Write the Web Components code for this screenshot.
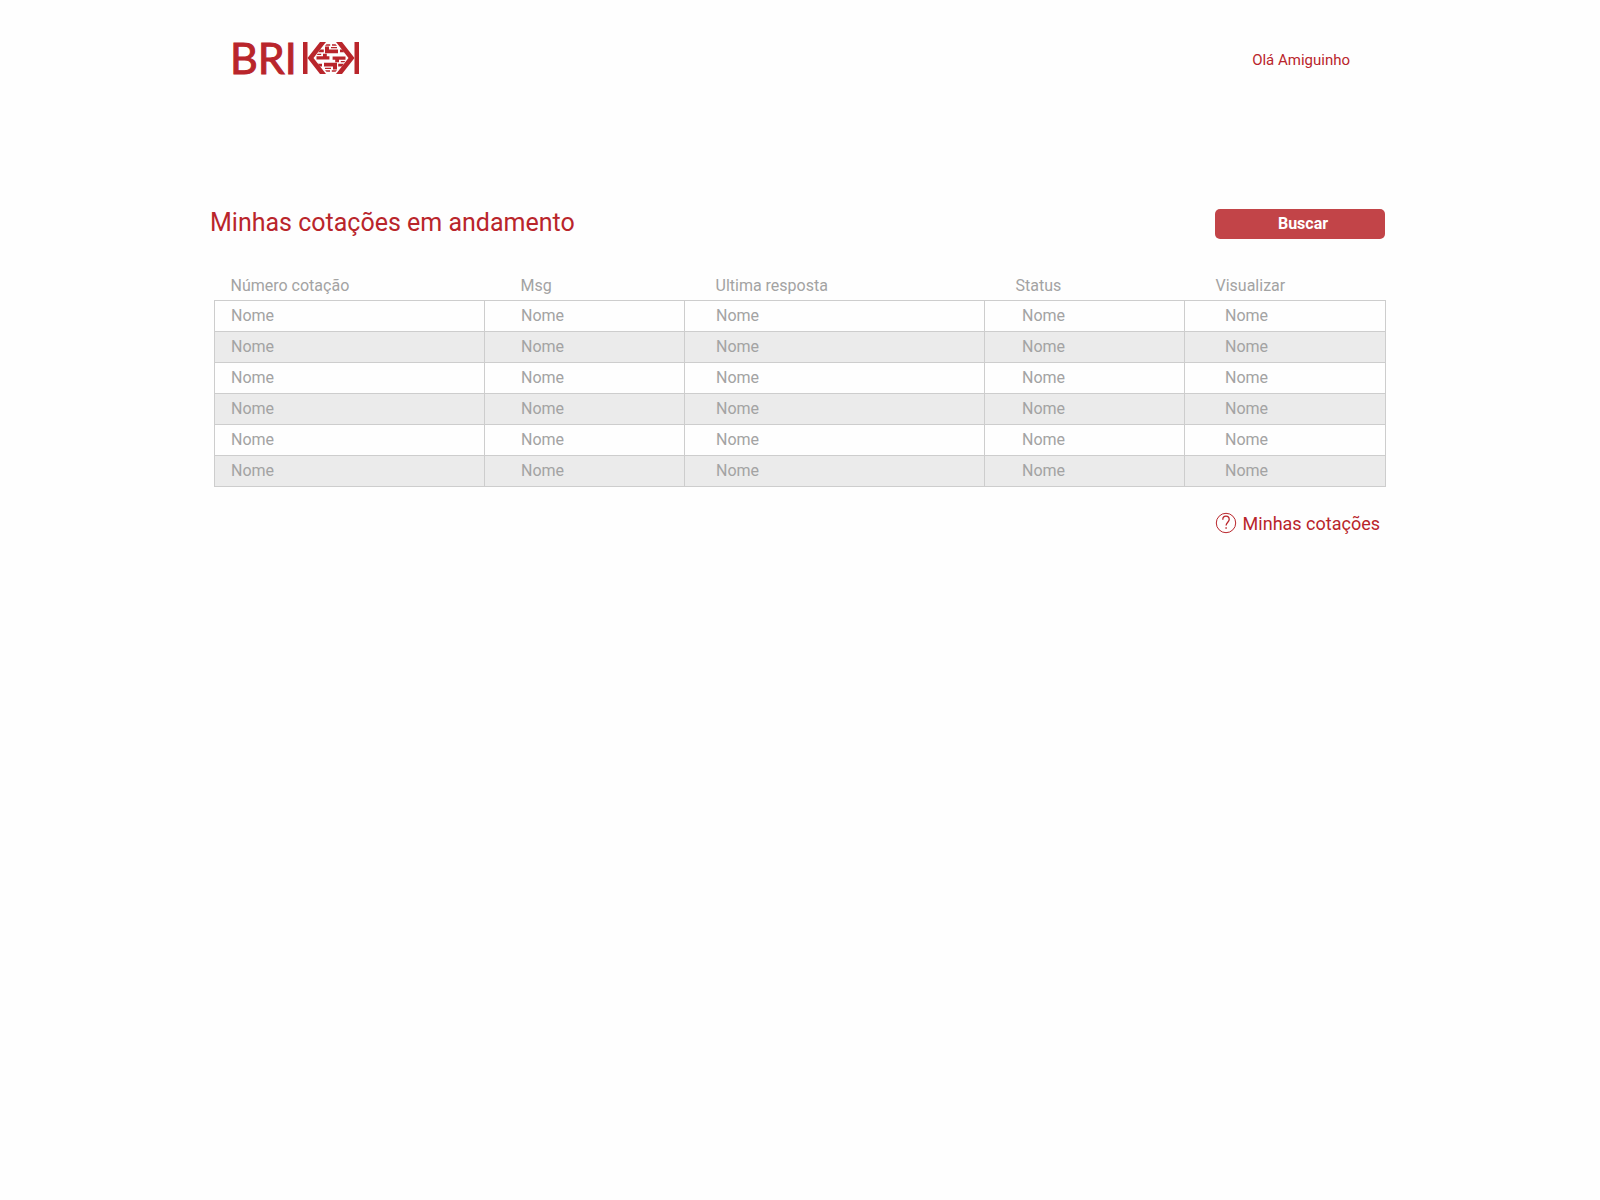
<!DOCTYPE html>
<html lang="pt-BR">
<head>
<meta charset="utf-8">
<meta name="viewport" content="width=device-width, initial-scale=1">
<title>Brikk - Minhas cotações</title>
<style>
  body { margin: 0; background: #fefefe; font-family: Roboto, "Liberation Sans", sans-serif; color: #b9252b; }
</style>
</head>
<body>
<quotes-page>
  <brikk-logo slot="brand"></brikk-logo>
  <user-greeting slot="user">Olá Amiguinho</user-greeting>
  <section-header>
    Minhas cotações em andamento
    <action-button slot="action">Buscar</action-button>
  </section-header>
  <quotes-table></quotes-table>
  <help-link>Minhas cotações</help-link>
</quotes-page>
<script>
  class ShadowElement extends HTMLElement {
    constructor() {
      super();
      this.attachShadow({ mode: 'open' }).innerHTML = this.constructor.markup;
    }
  }

  customElements.define('quotes-page', class extends ShadowElement {
    static markup = `
      <style>
        :host { display: block; max-width: 1180px; margin: 0 auto; }
        header { display: flex; align-items: center; justify-content: space-between; height: 120px; padding: 0 40px 0 20px; }
        main { display: flex; flex-direction: column; padding-top: 85px; }
      </style>
      <header><slot name="brand"></slot><slot name="user"></slot></header>
      <main><slot></slot></main>`;
  });

  customElements.define('brikk-logo', class extends ShadowElement {
    static markup = `
      <style>
        :host { display: block; padding-bottom: 2px; }
        a { display: block; }
        svg { display: block; fill: #b9252b; }
        text { font: 43px Lato, sans-serif; stroke: #b9252b; stroke-width: 1px; }
      </style>
      <a href="#" aria-label="Brikk">
        <svg width="132" height="58" viewBox="-2 -12 132 58">
          <defs>
            <path id="bricks" d="M-6-11.500h4v3H7v3.800H-6zM-14.500-1.700H-8v-2.600h3.800v2.600H-1.600V1.600H-14.500zM-11-8.500h3.800v2.800h-5.600zM9-8.500h2.200l2 2.800H9zM-4.500-13.700H-.8v1.500H-6zM1-13.700h3.500l1.500 1.500H1zM0-11h6v1.300H0zM-13.300-4.300h3.500v1.200h-4.400z"/>
          </defs>
          <text x="-2" y="32">BRI</text>
          <path d="M71 0h4.500v32H71zM122.500 0h4.500v32h-4.500z"/>
          <path d="M75.500 16 88 0H94L81.500 16 94 32H88zM122.500 16 110 0H104L116.500 16 104 32H110z"/>
          <use href="#bricks" transform="translate(99 16)"/>
          <use href="#bricks" transform="translate(99 16) rotate(180)"/>
        </svg>
      </a>`;
  });

  customElements.define('user-greeting', class extends ShadowElement {
    static markup = `
      <style>
        :host { display: block; font-size: 15px; line-height: 20px; }
      </style>
      <slot></slot>`;
  });

  customElements.define('section-header', class extends ShadowElement {
    static markup = `
      <style>
        :host { display: flex; align-items: flex-end; justify-content: space-between; padding-right: 5px; }
        h1 { margin: 0; font-size: 25px; line-height: 36px; font-weight: 400; }
      </style>
      <h1><slot></slot></h1>
      <slot name="action"></slot>`;
  });

  customElements.define('action-button', class extends ShadowElement {
    static markup = `
      <style>
        :host { display: block; padding-bottom: 2px; }
        button { display: block; width: 170px; height: 30px; padding: 0 0 0 6px; border: 0; border-radius: 5px;
          background: #c24448; color: #fff; font: 700 16px/30px Roboto, sans-serif; cursor: pointer; }
      </style>
      <button type="button"><slot></slot></button>`;
  });

  customElements.define('quotes-table', class extends ShadowElement {
    static markup = `
      <style>
        :host { display: block; padding: 28px 4px 0; }
        table { width: 100%; border-collapse: collapse; table-layout: fixed; color: #a3a3a3; font-size: 16px; line-height: 20px; }
        th, td { padding: 5px 0 5px 31px; text-align: left; font-weight: 400; }
        th { padding-top: 7px; padding-bottom: 4px; }
        td { border: 1px solid #cdcdcd; }
        tbody tr:nth-child(even) { background: #ebebeb; }
        th:nth-child(1), td:nth-child(1) { padding-left: 16px; }
        th:nth-child(2), td:nth-child(2) { padding-left: 36px; }
        td:nth-child(4) { padding-left: 37px; }
        td:nth-child(5) { padding-left: 40px; }
        .mid { width: 200px; } .wide { width: 300px; } .last { width: 201px; }
      </style>
      <table>
        <colgroup>
          <col><col class="mid"><col class="wide"><col class="mid"><col class="last">
        </colgroup>
        <thead>
          <tr><th scope="col">Número cotação</th><th scope="col">Msg</th><th scope="col">Ultima resposta</th><th scope="col">Status</th><th scope="col">Visualizar</th></tr>
        </thead>
        <tbody>
          ${'<tr><td>Nome</td><td>Nome</td><td>Nome</td><td>Nome</td><td>Nome</td></tr>'.repeat(6)}
        </tbody>
      </table>`;
  });

  customElements.define('help-link', class extends ShadowElement {
    static markup = `
      <style>
        :host { display: flex; justify-content: flex-end; padding: 25px 10px 0 0; }
        a { display: flex; align-items: flex-start; gap: 6px; color: inherit; text-decoration: none; font-size: 18px; line-height: 24px; }
        svg { display: block; fill: none; stroke: #b9252b; }
      </style>
      <a href="#">
        <svg width="22" height="22" viewBox="0 0 22 22" aria-hidden="true">
          <circle cx="11" cy="11" r="9.700" stroke-width="1"/>
          <path d="M7.800 7.700C7.800 5.400 9.200 4.200 11 4.200S14.200 5.400 14.200 7.400C14.200 10.100 11.100 10.400 11.100 13.600" stroke-width="1.300"/>
          <path d="M11.100 15.200v1.600" stroke-width="1.400"/>
        </svg>
        <slot></slot>
      </a>`;
  });
</script>
</body>
</html>
